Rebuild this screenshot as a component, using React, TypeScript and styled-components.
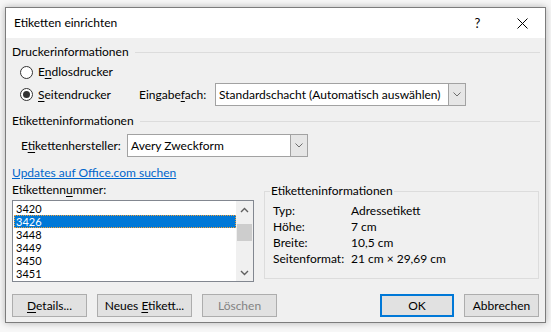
import React from "react";
import styled, { createGlobalStyle } from "styled-components";

const GlobalStyle = createGlobalStyle`
	html, body {
		margin: 0;
		padding: 0;
		background: #f7f7f7;
	}
	body {
		font-family: Lato, "Noto Sans", sans-serif;
		font-size: 12px;
		color: #000;
	}
`;

const Page = styled.div`
	width: 551px;
	height: 332px;
	box-sizing: border-box;
	padding: 7px 0 0 5px;
`;

const Window = styled.div`
	width: 541px;
	height: 316px;
	box-sizing: border-box;
	border: 1px solid #7c7c7c;
	background: #f0f0f0;
	box-shadow: 0 0 7px rgba(0, 0, 0, 0.28);
	display: flex;
	flex-direction: column;
`;

const TitleBar = styled.div`
	height: 30px;
	background: #fff;
	display: flex;
	align-items: center;
`;

const TitleText = styled.div`
	flex: 1;
	padding-left: 8px;
	line-height: 16px;
`;

const TitleButton = styled.div`
	width: 45px;
	height: 30px;
	display: flex;
	align-items: center;
	justify-content: center;
	font-size: 13px;
`;

const Body = styled.div`
	flex: 1;
	display: flex;
	flex-direction: column;
	padding: 0 5px 0 6px;
`;

const SectionHeader = styled.div<{ $top: number }>`
	display: flex;
	align-items: center;
	gap: 6px;
	line-height: 16px;
	height: 16px;
	margin-top: ${(p) => p.$top}px;
	&::after {
		content: "";
		flex: 1;
		height: 1px;
		background: #dcdcdc;
	}
`;

const Row = styled.div<{ $top?: number; $height: number }>`
	display: flex;
	align-items: center;
	height: ${(p) => p.$height}px;
	margin-top: ${(p) => p.$top ?? 0}px;
`;

const RadioItem = styled.div`
	width: 119px;
	margin-left: 8px;
	display: flex;
	align-items: center;
	gap: 5px;
	line-height: 16px;
`;

const RadioCircle = styled.span<{ $checked?: boolean }>`
	width: 11px;
	height: 11px;
	border: 1px solid #333;
	border-radius: 50%;
	background: #fff;
	display: flex;
	align-items: center;
	justify-content: center;
	&::after {
		content: "";
		width: 7px;
		height: 7px;
		border-radius: 50%;
		background: ${(p) => (p.$checked ? "#333" : "transparent")};
	}
`;

const FieldLabel = styled.div<{ $width: number; $indent?: number }>`
	width: ${(p) => p.$width}px;
	padding-left: ${(p) => p.$indent ?? 0}px;
	line-height: 16px;
`;

const Combo = styled.div<{ $width: number }>`
	width: ${(p) => p.$width}px;
	height: 23px;
	box-sizing: border-box;
	border: 1px solid #a2a2a2;
	background: #fff;
	display: flex;
`;

const ComboText = styled.div`
	flex: 1;
	padding-left: 3px;
	line-height: 21px;
	white-space: nowrap;
	overflow: hidden;
`;

const ComboArrow = styled.div`
	width: 17px;
	box-sizing: border-box;
	border-left: 1px solid #a2a2a2;
	background: #e6e6e6;
	display: flex;
	align-items: center;
	justify-content: center;
`;

const Link = styled.a`
	color: #0066cc;
	text-decoration: underline;
	line-height: 16px;
	margin-top: 8px;
	align-self: flex-start;
`;

const Columns = styled.div`
	display: grid;
	grid-template-columns: 242px 275px;
	column-gap: 10px;
	margin-top: 1px;
`;

const ListColumn = styled.div`
	display: flex;
	flex-direction: column;
`;

const ListCaption = styled.div`
	line-height: 16px;
`;

const ListBox = styled.div`
	margin-top: 2px;
	height: 82px;
	box-sizing: border-box;
	border: 1px solid #828790;
	background: #fff;
	display: flex;
`;

const ListItems = styled.div`
	flex: 1;
	padding: 1px 0 0 1px;
	overflow: hidden;
`;

const ListItem = styled.div<{ $selected?: boolean }>`
	height: 13px;
	font-size: 11px;
	line-height: 13px;
	padding-left: 2px;
	outline: ${(p) => (p.$selected ? "1px dotted #f2a13a" : "none")};
	outline-offset: -1px;
	background: ${(p) => (p.$selected ? "#0078d7" : "transparent")};
	color: ${(p) => (p.$selected ? "#fff" : "#000")};
`;

const ScrollBar = styled.div`
	width: 17px;
	background: #f0f0f0;
	display: flex;
	flex-direction: column;
`;

const ScrollButton = styled.div`
	height: 17px;
	display: flex;
	align-items: center;
	justify-content: center;
`;

const ScrollTrack = styled.div`
	flex: 1;
	padding-top: 6px;
`;

const ScrollThumb = styled.div`
	height: 17px;
	margin: 0 1px;
	background: #cdcdcd;
`;

const GroupBox = styled.fieldset`
	margin: 1px 0 0 0;
	padding: 4px 8px 10px 8px;
	border: 1px solid #dcdcdc;
	min-width: 0;
	height: 96px;
	box-sizing: border-box;
`;

const GroupLegend = styled.legend`
	padding: 0 1px;
	margin-left: -3px;
	line-height: 16px;
`;

const InfoGrid = styled.div`
	display: grid;
	grid-template-columns: 78px 1fr;
	grid-auto-rows: 16px;
	line-height: 16px;
`;

const ButtonRow = styled.div`
	display: flex;
	gap: 10px;
	margin-top: 12px;
	padding-right: 1px;
`;

const Spacer = styled.div`
	flex: 1;
`;

const Button = styled.div<{ $width: number; $default?: boolean; $disabled?: boolean }>`
	width: ${(p) => p.$width}px;
	height: 23px;
	box-sizing: border-box;
	border: ${(p) => (p.$default ? "2px solid #0078d7" : "1px solid #adadad")};
	background: #e1e1e1;
	color: ${(p) => (p.$disabled ? "#838383" : "#000")};
	display: flex;
	align-items: center;
	justify-content: center;
	line-height: 16px;
`;

const Key = styled.u`
	text-decoration: underline;
	text-underline-offset: 2px;
`;

const Chevron = ({ up, color = "#606060" }: { up?: boolean; color?: string }) => (
	<svg width="9" height="6" viewBox="0 0 9 6">
		<path
			d={up ? "M1 5L4.5 1.5L8 5" : "M1 1L4.5 4.5L8 1"}
			fill="none"
			stroke={color}
			strokeWidth="1.4"
		/>
	</svg>
);

const ComboChevron = () => (
	<svg width="8" height="5" viewBox="0 0 8 5">
		<path d="M0.5 0.5L4 4L7.5 0.5" fill="none" stroke="#6d6d6d" strokeWidth="1" />
	</svg>
);

const CloseIcon = () => (
	<svg width="11" height="11" viewBox="0 0 11 11">
		<path d="M0.5 0.5L10.5 10.5M10.5 0.5L0.5 10.5" stroke="#000" strokeWidth="1" />
	</svg>
);

const numbers = ["3420", "3426", "3448", "3449", "3450", "3451"];

const info: [string, string][] = [
	["Typ:", "Adressetikett"],
	["Höhe:", "7 cm"],
	["Breite:", "10,5 cm"],
	["Seitenformat:", "21 cm × 29,69 cm"],
];

function App() {
	return (
		<Page>
			<GlobalStyle />
			<Window>
				<TitleBar>
					<TitleText>Etiketten einrichten</TitleText>
					<TitleButton>?</TitleButton>
					<TitleButton>
						<CloseIcon />
					</TitleButton>
				</TitleBar>
				<Body>
					<SectionHeader $top={6}>Druckerinformationen</SectionHeader>
					<Row $top={1} $height={22}>
						<RadioItem>
							<RadioCircle />
							<span>
								E<Key>n</Key>dlosdrucker
							</span>
						</RadioItem>
					</Row>
					<Row $height={23}>
						<RadioItem>
							<RadioCircle $checked />
							<span>
								<Key>S</Key>eitendrucker
							</span>
						</RadioItem>
						<FieldLabel $width={76}>
							Eingabe<Key>f</Key>ach:
						</FieldLabel>
						<Combo $width={251}>
							<ComboText>Standardschacht (Automatisch auswählen)</ComboText>
							<ComboArrow>
								<ComboChevron />
							</ComboArrow>
						</Combo>
					</Row>

					<SectionHeader $top={7}>Etiketteninformationen</SectionHeader>
					<Row $top={5} $height={23}>
						<FieldLabel $width={106} $indent={9}>
							E<Key>t</Key>ikettenhersteller:
						</FieldLabel>
						<Combo $width={181}>
							<ComboText>Avery Zweckform</ComboText>
							<ComboArrow>
								<ComboChevron />
							</ComboArrow>
						</Combo>
					</Row>

					<Link>Updates auf Office.com suchen</Link>

					<Columns>
						<ListColumn>
							<ListCaption>
								Etikettenn<Key>u</Key>mmer:
							</ListCaption>
							<ListBox>
								<ListItems>
									{numbers.map((n) => (
										<ListItem key={n} $selected={n === "3426"}>
											{n}
										</ListItem>
									))}
								</ListItems>
								<ScrollBar>
									<ScrollButton>
										<Chevron up />
									</ScrollButton>
									<ScrollTrack>
										<ScrollThumb />
									</ScrollTrack>
									<ScrollButton>
										<Chevron />
									</ScrollButton>
								</ScrollBar>
							</ListBox>
						</ListColumn>
						<GroupBox>
							<GroupLegend>Etiketteninformationen</GroupLegend>
							<InfoGrid>
								{info.map(([label, value]) => (
									<React.Fragment key={label}>
										<span>{label}</span>
										<span>{value}</span>
									</React.Fragment>
								))}
							</InfoGrid>
						</GroupBox>
					</Columns>

					<ButtonRow>
						<Button $width={75}>
							<span>
								<Key>D</Key>etails...
							</span>
						</Button>
						<Button $width={95}>
							<span>
								Neues <Key>E</Key>tikett...
							</span>
						</Button>
						<Button $width={75} $disabled>
							Löschen
						</Button>
						<Spacer />
						<Button $width={74} $default>
							OK
						</Button>
						<Button $width={75}>Abbrechen</Button>
					</ButtonRow>
				</Body>
			</Window>
		</Page>
	);
}

export default App;
